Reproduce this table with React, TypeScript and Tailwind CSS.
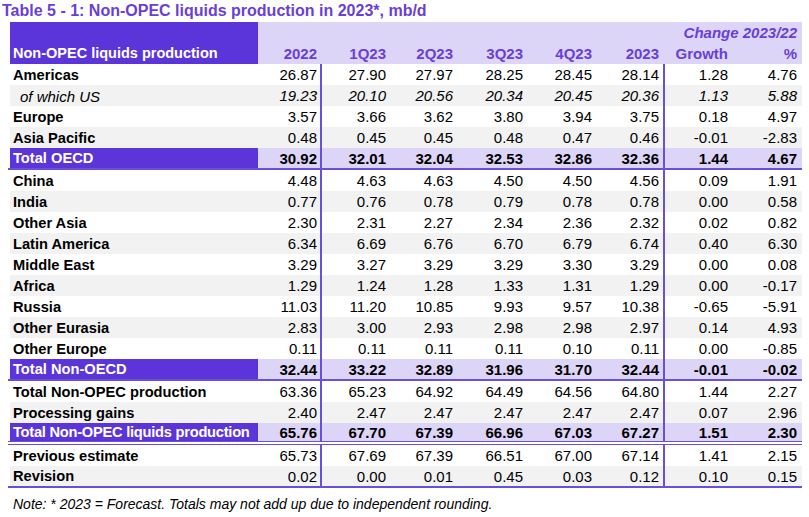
import React from 'react'

type Row = {
  label: string
  v: string[]
  kind: 'w' | 'g' | 't'
  italic?: boolean
  line?: 'solid' | 'double'
}

const ROWS: Row[] = [
  { label: 'Americas', kind: 'w', v: ['26.87', '27.90', '27.97', '28.25', '28.45', '28.14', '1.28', '4.76'] },
  { label: 'of which US', kind: 'g', italic: true, v: ['19.23', '20.10', '20.56', '20.34', '20.45', '20.36', '1.13', '5.88'] },
  { label: 'Europe', kind: 'w', v: ['3.57', '3.66', '3.62', '3.80', '3.94', '3.75', '0.18', '4.97'] },
  { label: 'Asia Pacific', kind: 'g', v: ['0.48', '0.45', '0.45', '0.48', '0.47', '0.46', '-0.01', '-2.83'] },
  { label: 'Total OECD', kind: 't', line: 'solid', v: ['30.92', '32.01', '32.04', '32.53', '32.86', '32.36', '1.44', '4.67'] },
  { label: 'China', kind: 'w', v: ['4.48', '4.63', '4.63', '4.50', '4.50', '4.56', '0.09', '1.91'] },
  { label: 'India', kind: 'g', v: ['0.77', '0.76', '0.78', '0.79', '0.78', '0.78', '0.00', '0.58'] },
  { label: 'Other Asia', kind: 'w', v: ['2.30', '2.31', '2.27', '2.34', '2.36', '2.32', '0.02', '0.82'] },
  { label: 'Latin America', kind: 'g', v: ['6.34', '6.69', '6.76', '6.70', '6.79', '6.74', '0.40', '6.30'] },
  { label: 'Middle East', kind: 'w', v: ['3.29', '3.27', '3.29', '3.29', '3.30', '3.29', '0.00', '0.08'] },
  { label: 'Africa', kind: 'g', v: ['1.29', '1.24', '1.28', '1.33', '1.31', '1.29', '0.00', '-0.17'] },
  { label: 'Russia', kind: 'w', v: ['11.03', '11.20', '10.85', '9.93', '9.57', '10.38', '-0.65', '-5.91'] },
  { label: 'Other Eurasia', kind: 'g', v: ['2.83', '3.00', '2.93', '2.98', '2.98', '2.97', '0.14', '4.93'] },
  { label: 'Other Europe', kind: 'w', v: ['0.11', '0.11', '0.11', '0.11', '0.10', '0.11', '0.00', '-0.85'] },
  { label: 'Total Non-OECD', kind: 't', line: 'solid', v: ['32.44', '33.22', '32.89', '31.96', '31.70', '32.44', '-0.01', '-0.02'] },
  { label: 'Total Non-OPEC production', kind: 'w', v: ['63.36', '65.23', '64.92', '64.49', '64.56', '64.80', '1.44', '2.27'] },
  { label: 'Processing gains', kind: 'g', v: ['2.40', '2.47', '2.47', '2.47', '2.47', '2.47', '0.07', '2.96'] },
  { label: 'Total Non-OPEC liquids production', kind: 't', line: 'double', v: ['65.76', '67.70', '67.39', '66.96', '67.03', '67.27', '1.51', '2.30'] },
  { label: 'Previous estimate', kind: 'w', v: ['65.73', '67.69', '67.39', '66.51', '67.00', '67.14', '1.41', '2.15'] },
  { label: 'Revision', kind: 'g', line: 'solid', v: ['0.02', '0.00', '0.01', '0.45', '0.03', '0.12', '0.10', '0.15'] },
]

// widths of the 8 number columns; 2022 and 2023 carry the vertical rule
const COLS = [
  'w-[64px] pr-[3px] border-r-2 border-[#6a4fd9]',
  'w-[67px] pr-[3px]',
  'w-[68px] pr-[4px]',
  'w-[69px] pr-[3px]',
  'w-[69px] pr-[3px]',
  'w-[70px] pr-[4px] border-r-2 border-[#6a4fd9]',
  'w-[67px] pr-[4px]',
  'w-[70px] pr-[5px]',
]

const HEAD_COLS = [
  'w-[64px] pr-[5px]',
  'w-[67px] pr-[3px]',
  'w-[68px] pr-[4px]',
  'w-[69px] pr-[3px]',
  'w-[69px] pr-[3px]',
  'w-[70px] pr-[6px]',
  'w-[67px] pr-[4px]',
  'w-[70px] pr-[5px]',
]
const HEADS = ['2022', '1Q23', '2Q23', '3Q23', '4Q23', '2023', 'Growth', '%']

function DataRow({ row }: { row: Row }) {
  const total = row.kind === 't'
  const rowBg = row.kind === 'g' ? 'bg-[#f2f2f2]' : total ? 'bg-[#ddd5f7]' : 'bg-white'
  const line =
    row.line === 'solid'
      ? 'border-b-2 border-[#6a4fd9] h-[22px]'
      : row.line === 'double'
        ? 'border-b-4 border-double border-[#6a4fd9] h-[22px]'
        : 'h-[21px]'
  const labelCls = total
    ? 'bg-[#5b35d9] text-white font-bold'
    : row.italic
      ? 'italic pl-[10px] text-black text-[15px]'
      : 'font-bold text-black'
  return (
    <div className={`flex pl-[2px] ${line}`}>
      <div className={`flex flex-1 ${rowBg}`}>
        <div
          className={`w-[248px] flex items-center pl-[3px] pt-[1px] whitespace-nowrap overflow-hidden text-[14.67px] ${labelCls} ${
            row.label.length > 30 ? 'tracking-[-0.25px]' : ''
          }`}
        >
          {row.label}
        </div>
        {row.v.map((val, i) => (
          <div
            key={i}
            className={`${COLS[i]} flex items-center justify-end ${total ? 'font-bold' : ''} ${row.italic ? 'italic' : ''}`}
          >
            {val}
          </div>
        ))}
      </div>
    </div>
  )
}

export default function App() {
  return (
    <div className="w-[809px] h-[517px] bg-white text-black text-[15px] leading-none" style={{ fontFamily: '"Liberation Sans", Arial, sans-serif' }}>
      {/* Title */}
      <div className="h-[21px] pl-[2px] flex items-center text-[16px] font-bold text-[#6a3fd6] whitespace-nowrap">
        Table 5 - 1: Non-OPEC liquids production in 2023*, mb/d
      </div>

      {/* Header */}
      <div className="flex h-[42px] mt-[1px] ml-[10px] w-[792px]">
        <div className="w-[248px] bg-[#5b35d9] text-white font-bold text-[14.5px] flex items-end pl-[3px] pb-[4px] whitespace-nowrap">
          Non-OPEC liquids production
        </div>
        <div className="flex-1 bg-[#ddd5f7] flex flex-col text-[#6a3fd6] font-bold">
          <div className="h-[20px] flex items-center justify-end pr-[5px] pt-[1px] italic">Change 2023/22</div>
          <div className="h-[22px] flex">
            {HEADS.map((h, i) => (
              <div key={h} className={`${HEAD_COLS[i]} flex items-center justify-end`}>
                {h}
              </div>
            ))}
          </div>
        </div>
      </div>

      {/* Body */}
      <div className="w-[794px] ml-[8px]">
        {ROWS.map((r) => (
          <DataRow key={r.label} row={r} />
        ))}
      </div>

      {/* Note */}
      <div className="h-[31px] pl-[13px] flex items-center text-[14px] italic whitespace-nowrap">
        Note: * 2023 = Forecast. Totals may not add up due to independent rounding.
      </div>
    </div>
  )
}
